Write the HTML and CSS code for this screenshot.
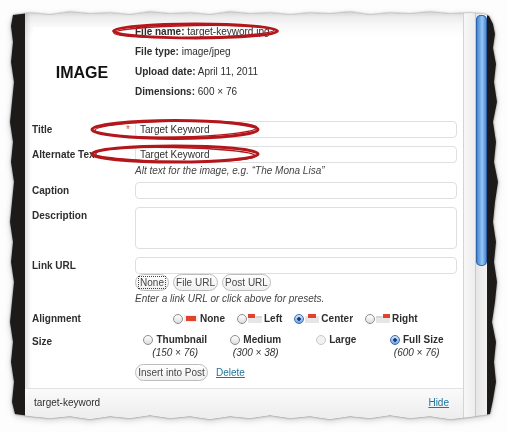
FILE: index.html
```html
<!DOCTYPE html>
<html>
<head>
<meta charset="utf-8">
<link rel="stylesheet" href="styles.css">
</head>
<body>
<div class="stage">
  <div class="shadow">
    <div class="frame">
      <div class="edge-left"></div>
      <div class="panel">
        <div class="head">
          <div class="thumb">IMAGE</div>
          <div class="meta">
            <p><strong>File name:</strong> target-keyword.jpg</p>
            <p><strong>File type:</strong> image/jpeg</p>
            <p><strong>Upload date:</strong> April 11, 2011</p>
            <p><strong>Dimensions:</strong> 600 × 76</p>
          </div>
        </div>

        <div class="fields">
          <div class="row r-title">
            <div class="lbl">Title <span class="req">*</span></div>
            <div class="field"><div class="input">Target Keyword</div></div>
          </div>
          <div class="row r-alt">
            <div class="lbl">Alternate Text</div>
            <div class="field">
              <div class="input">Target Keyword</div>
              <p class="help">Alt text for the image, e.g. “The Mona Lisa”</p>
            </div>
          </div>
          <div class="row r-caption">
            <div class="lbl">Caption</div>
            <div class="field"><div class="input"></div></div>
          </div>
          <div class="row r-desc">
            <div class="lbl">Description</div>
            <div class="field"><div class="input textarea"></div></div>
          </div>
          <div class="row r-link">
            <div class="lbl">Link URL</div>
            <div class="field">
              <div class="input"></div>
              <div class="btns">
                <span class="btn b-none"><span class="focus">None</span></span>
                <span class="btn b-file">File URL</span>
                <span class="btn b-post">Post URL</span>
              </div>
              <p class="help">Enter a link URL or click above for presets.</p>
            </div>
          </div>
          <div class="row r-align">
            <div class="lbl">Alignment</div>
            <div class="align">
              <span class="opt"><span class="radio"></span><svg class="aicon" width="14" height="9" viewBox="0 0 14 9"><rect x="0" y="1" width="14" height="7" fill="#f0f0f0"/><rect x="2" y="2" width="10" height="5" fill="#e2412b"/></svg><b>None</b></span>
              <span class="opt"><span class="radio"></span><svg class="aicon" width="14" height="9" viewBox="0 0 14 9"><rect x="0" y="2" width="14" height="7" fill="#e6e6e6"/><rect x="0" y="0" width="7" height="4" fill="#e2412b"/><rect x="8" y="2" width="6" height="2" fill="#d6d6d6"/></svg><b>Left</b></span>
              <span class="opt"><span class="radio on"></span><svg class="aicon" width="14" height="9" viewBox="0 0 14 9"><rect x="0" y="2" width="14" height="7" fill="#e6e6e6"/><rect x="3" y="0" width="8" height="4" fill="#e2412b"/></svg><b>Center</b></span>
              <span class="opt"><span class="radio"></span><svg class="aicon" width="14" height="9" viewBox="0 0 14 9"><rect x="0" y="2" width="14" height="7" fill="#e6e6e6"/><rect x="7" y="0" width="7" height="4" fill="#e2412b"/><rect x="0" y="2" width="6" height="2" fill="#d6d6d6"/></svg><b>Right</b></span>
            </div>
          </div>
          <div class="row r-size">
            <div class="lbl">Size</div>
            <div class="sizes">
              <div class="size"><span class="name"><span class="radio"></span><b>Thumbnail</b></span><em>(150 × 76)</em></div>
              <div class="size"><span class="name"><span class="radio"></span><b>Medium</b></span><em>(300 × 38)</em></div>
              <div class="size"><span class="name"><span class="radio off"></span><b>Large</b></span></div>
              <div class="size"><span class="name"><span class="radio on"></span><b>Full Size</b></span><em>(600 × 76)</em></div>
            </div>
          </div>
          <div class="row r-insert">
            <div class="lbl"></div>
            <div class="actions">
              <span class="btn b-insert">Insert into Post</span>
              <a class="link" href="#">Delete</a>
            </div>
          </div>
        </div>

        <div class="footer">
          <span>target-keyword</span>
          <a class="link" href="#">Hide</a>
        </div>
      </div>
      <div class="scroll">
        <div class="gutter"></div>
        <div class="track"><div class="bar"></div></div>
      </div>
      <div class="edge-right"></div>
    </div>
  </div>

  <svg class="marks" width="507" height="432" viewBox="0 0 507 432">
    <g fill="none" stroke="#b3171c" stroke-linecap="round">
      <ellipse cx="195.5" cy="31" rx="82" ry="7" stroke-width="2.8"/>
      <ellipse cx="194" cy="31.5" rx="80" ry="6" stroke-width="1.4" transform="rotate(-1 194 31.5)"/>
      <ellipse cx="175" cy="129.5" rx="83" ry="9" stroke-width="3"/>
      <ellipse cx="176" cy="129" rx="81" ry="8" stroke-width="1.4" transform="rotate(-1 176 129)"/>
      <ellipse cx="175" cy="154" rx="83" ry="8" stroke-width="3"/>
      <ellipse cx="174" cy="154.5" rx="81" ry="7" stroke-width="1.4" transform="rotate(1 174 154.5)"/>
    </g>
  </svg>
</div>
</body>
</html>
```

FILE: styles.css
```css
html, body {
  margin: 0;
  padding: 0;
  background: #fdfdfd;
}

.stage {
  position: relative;
  width: 507px;
  height: 432px;
  overflow: hidden;
  font-family: "Lucida Grande", "Liberation Sans", Arial, sans-serif;
  font-size: 10px;
  color: #2e2e2e;
}

.shadow {
  filter: drop-shadow(0 0 1.2px rgba(0, 0, 0, 0.45)) drop-shadow(0 2px 3px rgba(0, 0, 0, 0.18));
}

.frame {
  width: 488px;
  height: 407px;
  margin: 12px 0 0 10px;
  display: flex;
  clip-path: polygon(
    3px 3px, 20px 1px, 40px 3px, 60px 0px, 80px 2px, 100px 1px, 120px 3px, 140px 0px, 160px 2px, 180px 1px,
    200px 3px, 220px 0px, 240px 2px, 260px 1px, 280px 3px, 300px 1px, 320px 2px, 340px 0px, 360px 3px,
    380px 1px, 400px 2px, 420px 0px, 440px 2px, 460px 1px, 474px 2px, 479px 4px,
    483px 12px, 485px 22px, 483px 36px, 486px 52px, 484px 70px, 487px 90px, 483px 110px, 486px 130px,
    484px 150px, 488px 170px, 485px 190px, 483px 210px, 486px 230px, 484px 250px, 487px 270px,
    485px 290px, 482px 310px, 486px 330px, 484px 350px, 486px 370px, 483px 388px, 480px 402px,
    460px 405px, 440px 407px, 420px 404px, 400px 406px, 380px 403px, 360px 406px, 340px 404px,
    320px 407px, 300px 404px, 280px 406px, 260px 403px, 240px 406px, 220px 404px, 200px 407px,
    180px 404px, 160px 406px, 140px 403px, 120px 406px, 100px 404px, 80px 407px, 60px 404px,
    40px 406px, 20px 404px, 5px 402px,
    2px 390px, 4px 370px, 1px 350px, 3px 330px, 0px 310px, 2px 290px, 4px 270px, 1px 250px,
    3px 230px, 0px 210px, 2px 190px, 4px 170px, 1px 150px, 3px 130px, 0px 110px, 2px 90px,
    4px 70px, 1px 50px, 3px 30px, 1px 14px
  );
}

.edge-left {
  width: 15px;
  flex: none;
  background: #1c1b19;
}

.edge-right {
  width: 11px;
  flex: none;
  background: #1c1b19;
}

.panel {
  flex: 1;
  display: flex;
  flex-direction: column;
  background: linear-gradient(#d6d6d6 0, #ececec 5px, #f8f8f8 13px, #fff 26px);
  box-shadow: inset 5px 0 4px -2px rgba(0, 0, 0, 0.13);
}

/* header with image + meta */
.head {
  display: flex;
  gap: 4px;
  padding: 10px 0 0 8px;
}

.thumb {
  width: 98px;
  height: 86px;
  margin-top: 5px;
  background: #fff;
  display: flex;
  align-items: center;
  justify-content: center;
  font-weight: bold;
  font-size: 16px;
  color: #111;
  font-family: "Liberation Sans", Arial, sans-serif;
  padding-top: 6px;
  box-sizing: border-box;
}

.meta p {
  margin: 0;
  line-height: 20px;
}

/* form */
.fields {
  padding-left: 7px;
}

.row {
  display: grid;
  grid-template-columns: 103px 322px;
}

.lbl {
  font-weight: bold;
  line-height: 17px;
  display: flex;
  justify-content: space-between;
  padding-right: 5px;
}

.req {
  color: #e0542b;
  font-weight: normal;
}

.input {
  height: 17px;
  box-sizing: border-box;
  border: 1px solid #dfdfdf;
  border-radius: 4px;
  background: #fff;
  padding: 0 4px;
  line-height: 15px;
}

.input.textarea {
  height: 42px;
}

.help {
  margin: 1px 0 0;
  line-height: 13px;
  font-style: italic;
  color: #444;
}

.r-title { margin-top: 8px; }
.r-alt { margin-top: 8px; }
.r-caption { margin-top: 5px; }
.r-desc { margin-top: 8px; }
.r-link { margin-top: 8px; }
.r-align { margin-top: 5px; }
.r-size { margin-top: 6px; }
.r-insert { margin-top: 5px; }

.btns {
  display: flex;
  gap: 4px;
  margin-top: 0;
}

.btn {
  display: inline-flex;
  align-items: center;
  justify-content: center;
  height: 17px;
  box-sizing: border-box;
  border: 1px solid #bcbcbc;
  border-radius: 9px;
  background: linear-gradient(#fff, #efefef);
  color: #464646;
  font-size: 10px;
}

.b-none { width: 34px; }
.b-file { width: 45px; }
.b-post { width: 49px; }
.b-insert { width: 73px; }

.focus {
  border: 1px dotted #444;
  padding: 0 1px;
  line-height: 11px;
}

.align {
  display: flex;
  gap: 12px;
  padding-left: 38px;
  line-height: 14px;
  font-weight: bold;
}

.opt {
  display: inline-flex;
  align-items: center;
}

.aicon {
  margin: 0 2px 0 1px;
}

.radio {
  display: inline-block;
  width: 10px;
  height: 10px;
  border-radius: 50%;
  box-sizing: border-box;
  border: 1px solid #8d8d8d;
  background: linear-gradient(#fff, #dedede);
  flex: none;
}

.radio.on {
  border-color: #3b6eae;
  background: radial-gradient(circle, #1c3a68 0 1.5px, transparent 2px), linear-gradient(#d3e6fc, #6ba3e6);
}

.radio.off {
  border-color: #c8c8c8;
  background: #f2f2f2;
}

.sizes {
  display: grid;
  grid-template-columns: repeat(4, 1fr);
}

.size {
  display: flex;
  flex-direction: column;
  align-items: center;
  line-height: 13px;
}

.size .name {
  display: inline-flex;
  align-items: center;
  gap: 3px;
}

.size em {
  color: #333;
}

.actions {
  display: flex;
  align-items: center;
  gap: 8px;
}

.link {
  color: #21759b;
  text-decoration: underline;
}

.footer {
  margin-top: auto;
  height: 31px;
  box-sizing: border-box;
  border-top: 1px solid #e2e2e2;
  background: linear-gradient(#fafafa, #ededed);
  display: flex;
  justify-content: space-between;
  align-items: center;
  padding: 0 14px 4px 9px;
}

/* scrollbar */
.scroll {
  width: 24px;
  flex: none;
  display: flex;
}

.gutter {
  width: 12px;
  border-left: 1px solid #d4d4d4;
  background: linear-gradient(90deg, #f7f7f7, #ededed);
}

.track {
  width: 11px;
  border-left: 1px solid #c9c9c9;
  background: linear-gradient(90deg, #e6e6e6, #f2f2f2);
  padding-top: 3px;
}

.bar {
  height: 251px;
  border-radius: 5px;
  background: linear-gradient(90deg, #3a78c8, #7fb6ee 45%, #9bc8f4 55%, #3a78c8);
  box-shadow: inset 0 0 0 1px #2d63ad;
}

.marks {
  position: absolute;
  left: 0;
  top: 0;
  pointer-events: none;
}
```
